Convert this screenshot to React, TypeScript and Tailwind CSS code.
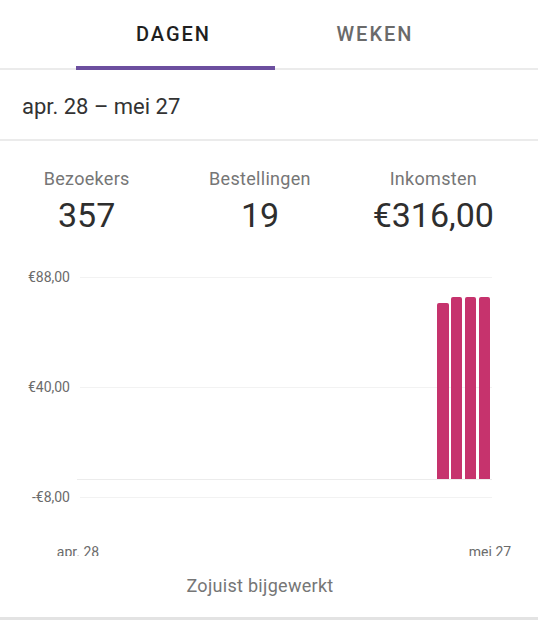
import React from 'react';

const font = { fontFamily: 'Roboto, "Liberation Sans", sans-serif' };

const bars = [
    { x: 437, w: 12, top: 48 },
    { x: 451, w: 11, top: 42 },
    { x: 465, w: 11, top: 42 },
    { x: 479, w: 11, top: 42 },
];

const Chart: React.FC = () => {
    return (
        <div className="h-[301px] overflow-hidden">
            <svg width="538" height="301" viewBox="0 0 538 301">
                {/* grid */}
                <line x1="80" x2="492" y1="22.5" y2="22.5" stroke="#f2f2f2" />
                <line x1="80" x2="492" y1="132.5" y2="132.5" stroke="#f2f2f2" />
                <line x1="77" x2="492" y1="224.5" y2="224.5" stroke="#ececec" />
                <line x1="80" x2="492" y1="242.5" y2="242.5" stroke="#f2f2f2" />
                <g fill="#6b6b6b" fontSize="14" textAnchor="end" style={font}>
                    <text x="70" y="27">€88,00</text>
                    <text x="70" y="137">€40,00</text>
                    <text x="70" y="247">-€8,00</text>
                </g>
                {bars.map((b, i) => (
                    <path
                        key={i}
                        d={`M${b.x} ${224} V${b.top + 2} Q${b.x} ${b.top} ${b.x + 2} ${b.top} H${b.x + b.w - 2} Q${b.x + b.w} ${b.top} ${b.x + b.w} ${b.top + 2} V224 Z`}
                        fill="#c6336d"
                    />
                ))}
                <g fill="#6b6b6b" fontSize="14" textAnchor="middle" style={font}>
                    <text x="78" y="302">apr. 28</text>
                    <text x="490" y="302">mei 27</text>
                </g>
            </svg>
        </div>
    );
};

export default function App() {
    return (
        <div className="w-[538px] h-[620px] bg-white overflow-hidden" style={font}>
            {/* tabs */}
            <div className="relative">
                <div className="flex h-[68px] pl-[75px]">
                    <div className="relative w-[200px] pr-[3px] flex items-center justify-center text-[20px] font-medium tracking-[2px] text-[#1f1f1f]">
                        DAGEN
                        <div className="absolute left-[1px] right-0 bottom-[-2px] h-[4px] bg-[#6c4f9f]" />
                    </div>
                    <div className="w-[200px] flex items-center justify-center text-[20px] font-medium tracking-[2px] text-[#6a6a6a]">
                        WEKEN
                    </div>
                </div>
                <div className="h-[2px] bg-[#ebebeb]" />
            </div>

            {/* period */}
            <div className="h-[69px] pt-[23px] pl-[22px] text-[22px] leading-[28px] text-[#333333]">
                apr. 28 – mei 27
            </div>
            <div className="h-[2px] bg-[#ebebeb]" />

            {/* stats */}
            <div className="grid grid-cols-3 w-[520px] pt-[26px]">
                {[
                    ['Bezoekers', '357'],
                    ['Bestellingen', '19'],
                    ['Inkomsten', '€316,00'],
                ].map(([label, value]) => (
                    <div key={label} className="flex flex-col items-center">
                        <div className="text-[18px] leading-[24px] text-[#767676] tracking-[0.3px]">{label}</div>
                        <div className="mt-[4px] text-[34px] leading-[40px] text-[#2e2e2e]">{value}</div>
                    </div>
                ))}
            </div>

            <div className="mt-[20px]">
                <Chart />
            </div>

            <div className="w-[520px] mt-[18px] text-center text-[18px] leading-[24px] text-[#767676] tracking-[0.3px]">
                Zojuist bijgewerkt
            </div>
            <div className="mt-[19px] h-[3px] bg-[#e3e3e3]" />
        </div>
    );
}
